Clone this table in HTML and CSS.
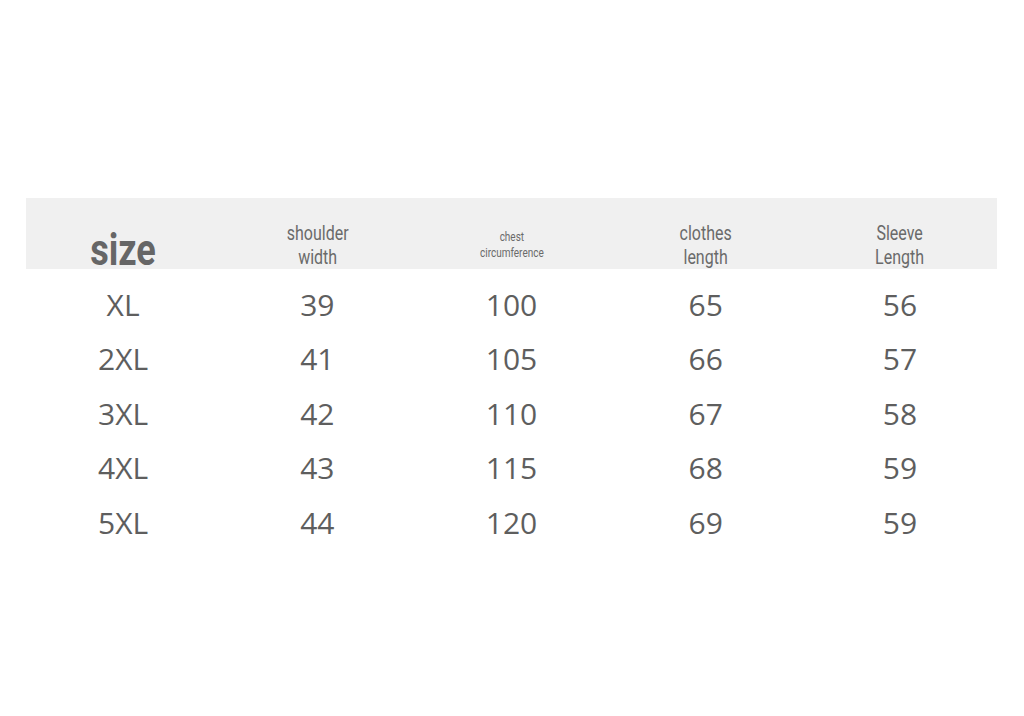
FILE: index.html
```html
<!DOCTYPE html>
<html>
<head>
<meta charset="utf-8">
<link rel="stylesheet" href="styles.css">
</head>
<body>
<div class="chart">
  <div class="head">
    <div class="hcell size"><span class="cond">size</span></div>
    <div class="hcell"><span class="cond lbl">shoulder<br>width</span></div>
    <div class="hcell"><span class="cond small">chest<br>circumference</span></div>
    <div class="hcell"><span class="cond lbl">clothes<br>length</span></div>
    <div class="hcell"><span class="cond lbl">Sleeve<br>Length</span></div>
  </div>
  <div class="rows">
    <div class="row"><span>XL</span><span>39</span><span>100</span><span>65</span><span>56</span></div>
    <div class="row"><span>2XL</span><span>41</span><span>105</span><span>66</span><span>57</span></div>
    <div class="row"><span>3XL</span><span>42</span><span>110</span><span>67</span><span>58</span></div>
    <div class="row"><span>4XL</span><span>43</span><span>115</span><span>68</span><span>59</span></div>
    <div class="row"><span>5XL</span><span>44</span><span>120</span><span>69</span><span>59</span></div>
  </div>
</div>
</body>
</html>
```
FILE: styles.css
```css
html, body {
  margin: 0;
  padding: 0;
  background: #ffffff;
}
.chart {
  margin: 198px 0 0 26px;
  width: 971px;
}
.head {
  display: grid;
  grid-template-columns: repeat(5, 1fr);
  height: 71px;
  background: #f0f0f0;
  box-sizing: border-box;
  padding-top: 22px;
}
.hcell {
  display: flex;
  align-items: center;
  justify-content: center;
  text-align: center;
  color: #6a6a6a;
  font-family: Roboto, "Liberation Sans", sans-serif;
}
.cond {
  display: inline-block;
  transform: scaleX(0.8);
}
.lbl {
  font-size: 20px;
  line-height: 24px;
  font-weight: 400;
}
.small {
  font-size: 12.5px;
  line-height: 16px;
  font-weight: 400;
}
.size {
  align-items: flex-end;
}
.size .cond {
  font-size: 44px;
  line-height: 44px;
  font-weight: 700;
  color: #666;
  margin-bottom: -3px;
  transform: scaleX(0.82);
}
.rows {
  padding-top: 8px;
}
.row {
  display: grid;
  grid-template-columns: repeat(5, 1fr);
  height: 54.5px;
  align-items: center;
  text-align: center;
  font-family: "Open Sans", "Noto Sans", sans-serif;
  font-size: 30px;
  color: #5e5e5e;
}
```
